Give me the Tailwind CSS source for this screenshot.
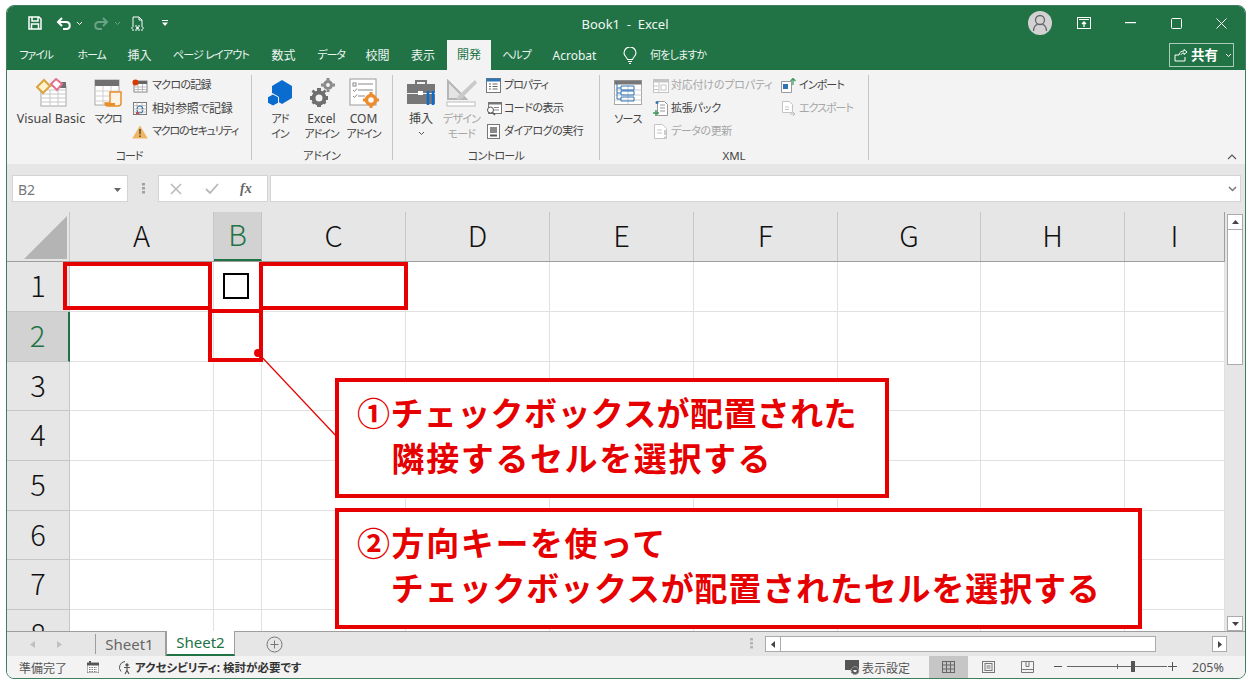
<!DOCTYPE html>
<html lang="ja">
<head>
<meta charset="UTF-8">
<title>Book1 - Excel</title>
<script src="https://cdn.jsdelivr.net/npm/@tailwindcss/browser@4"></script>
</head>
<body class="relative bg-white w-[1252px] h-[686px] overflow-hidden font-['Noto_Sans','Noto_Sans_CJK_JP',sans-serif] [font-feature-settings:'palt'] text-[12px] text-[#444]">

<!-- Window -->
<div class="absolute left-[6px] top-[5px] w-[1240px] h-[674px] border border-[#3f7f60] rounded-[8px] overflow-hidden flex flex-col bg-[#e6e6e6]">

  <!-- Title bar -->
  <div class="h-[34px] bg-[#217346] text-white flex items-center shrink-0">
    <div class="w-[571px] flex items-center pl-[21px]">
      <svg class="w-[14px] h-[14px]" viewBox="0 0 14 14" fill="none" stroke="#fff" stroke-width="1.5"><path d="M1 1h10l2 2v10H1z"/><path d="M4 1v4h6V1M3.500 13V8h7v5"/></svg>
      <svg class="w-[15px] h-[13px] ml-[14px]" viewBox="0 0 15 13" fill="none" stroke="#fff" stroke-width="2"><path d="M6 1L2 5l4 4"/><path d="M2 5h8c5 0 5 7 0 7H7"/></svg>
      <svg class="w-[7px] h-[5px] ml-[5px]" viewBox="0 0 7 5" fill="none" stroke="#fff"><path d="M1 1l2.500 2.500L6 1"/></svg>
      <svg class="w-[15px] h-[13px] ml-[11px]" viewBox="0 0 15 13" fill="none" stroke="#6aa287" stroke-width="2"><path d="M9 1l4 4-4 4"/><path d="M13 5H5c-5 0-5 7 0 7h3"/></svg>
      <svg class="w-[7px] h-[5px] ml-[5px]" viewBox="0 0 7 5" fill="none" stroke="#6aa287"><path d="M1 1l2.500 2.500L6 1"/></svg>
      <svg class="w-[13px] h-[15px] ml-[10px]" viewBox="0 0 13 15" fill="none" stroke="#fff"><path d="M2 9V1h6l3 3v5M8 1v3h3"/><rect x="1" y="10" width="11" height="4" stroke-dasharray="2 1"/><circle cx="6.500" cy="12" r="1" fill="#fff"/></svg>
      <svg class="w-[6px] h-[6px] ml-[18px]" viewBox="0 0 6 6" fill="#fff"><path d="M0 0h6v1H0zM0 2.500h6L3 6z"/></svg>
    </div>
    <div class="w-[94px] pt-[3px] text-center text-[13px] text-[#f2f7f4] whitespace-pre">Book1  -  Excel</div>
    <div class="flex-1 flex items-center">
      <div class="ml-[356px] w-[24px] h-[24px] rounded-full bg-[#d2d2d2] flex items-center justify-center">
        <svg class="w-[16px] h-[18px]" viewBox="0 0 16 18" fill="none" stroke="#666" stroke-width="1.300"><circle cx="8" cy="6" r="4.500"/><path d="M1.500 17c0-5 3-6.500 4-6.500M14.500 17c0-5-3-6.500-4-6.500"/></svg>
      </div>
      <svg class="w-[14px] h-[12px] ml-[25px]" viewBox="0 0 14 12" fill="none" stroke="#fff"><rect x=".5" y=".5" width="13" height="11"/><path d="M2 2.500h10" /><path d="M7 10V5M5 7l2-2 2 2" stroke-width="1.300"/></svg>
      <svg class="w-[11px] h-[2px] ml-[34px]" viewBox="0 0 11 2"><rect width="11" height="1.200" fill="#fff"/></svg>
      <svg class="w-[11px] h-[11px] ml-[35px]" viewBox="0 0 11 11" fill="none" stroke="#fff"><rect x=".5" y=".5" width="10" height="10" rx="1"/></svg>
      <svg class="w-[11px] h-[11px] ml-[34px]" viewBox="0 0 11 11" fill="none" stroke="#fff"><path d="M.5.500l10 10M10.500.500l-10 10"/></svg>
    </div>
  </div>

  <!-- Tabs -->
  <div class="h-[30px] pt-px bg-[#217346] text-[#eef5f1] flex items-stretch shrink-0 relative">
    <div class="w-[58px] flex items-center justify-center text-[11px] tracking-[-1.2px]">ファイル</div>
    <div class="w-[53px] flex items-center justify-center text-[11px] tracking-[-1.200px]">ホーム</div>
    <div class="w-[43px] flex items-center justify-center">挿入</div>
    <div class="w-[100px] flex items-center justify-center text-[11px] tracking-[-0.8px]">ページ レイアウト</div>
    <div class="w-[45px] flex items-center justify-center">数式</div>
    <div class="w-[50px] flex items-center justify-center text-[11px] tracking-[-1.2px]">データ</div>
    <div class="w-[43px] flex items-center justify-center">校閲</div>
    <div class="w-[48px] flex items-center justify-center">表示</div>
    <div class="w-[44px] -mt-px flex items-center justify-center bg-[#f3f3f3] text-[#217346]">開発</div>
    <div class="w-[51px] flex items-center justify-center text-[11px] tracking-[-0.9px]">ヘルプ</div>
    <div class="w-[65px] flex items-center justify-center">Acrobat</div>
    <svg class="w-[14px] h-[18px] ml-[16px] self-center" viewBox="0 0 14 18" fill="none" stroke="#fff" stroke-width="1.100"><path d="M4.500 12.500C4 10 1 9 1 6a6 6 0 0 1 12 0c0 3-3 4-3.500 6.500z"/><path d="M5 14.500h4M6 16.500h2"/></svg>
    <div class="ml-[13px] flex items-center text-[11px] tracking-[-0.8px]">何をしますか</div>
    <div class="absolute left-[1162px] top-[3px] w-[65px] h-[24px] border border-[#a9cdb9] flex items-center text-white">
      <svg class="w-[14px] h-[13px] ml-[4px]" viewBox="0 0 14 13" fill="none" stroke="#fff"><path d="M1 6v6h10V8M1 6h4M5 6c0-3 3-4 5-4V.500l3 2.500-3 2.500V4c-2 0-3 1-3 2"/></svg>
      <span class="ml-[3px] font-bold text-[13.500px]">共有</span>
      <svg class="w-[7px] h-[5px] ml-[7px]" viewBox="0 0 7 5" fill="none" stroke="#fff"><path d="M1 1l2.500 2.500L6 1"/></svg>
    </div>
  </div>

  <!-- Ribbon -->
  <div class="h-[94px] bg-[#f3f3f3] flex items-start shrink-0 relative text-[#444]">

    <!-- Code group -->
    <div class="w-[244px] h-[94px] pt-[4px] flex flex-col shrink-0">
      <div class="h-[73px] flex">
        <div class="ml-[9px] w-[70px] shrink-0 flex flex-col items-center">
          <div class="h-[37px] flex items-center">
            <svg class="w-[31px] h-[29px]" viewBox="0 0 31 29"><rect x="5" y="8" width="25" height="20" fill="#fff" stroke="#a8a8a8"/><path d="M5 12h25M5 16h25M5 20h25M5 24h25M14 12v16M22 12v16" stroke="#c8c8c8"/><rect x="22" y="4" width="8" height="6" fill="#707070"/><path d="M1 9l7-7 6 6-7 7z" fill="#fff2cc" stroke="#d9a441" stroke-width="2"/><path d="M15 6l5-5 6 5-5 6z" fill="#fff" stroke="#e0748f" stroke-width="2"/></svg>
          </div>
          <div class="leading-[15px] whitespace-nowrap text-[12.500px]">Visual Basic</div>
        </div>
        <div class="ml-[6px] w-[32px] shrink-0 flex flex-col items-center">
          <div class="h-[37px] flex items-center">
            <svg class="w-[29px] h-[28px]" viewBox="0 0 29 28"><rect x="1" y="1" width="24" height="25" fill="#fff" stroke="#a8a8a8"/><rect x="1" y="1" width="24" height="6" fill="#707070"/><path d="M1 12h24M1 17h24M1 22h24M9 7v19M17 7v19" stroke="#d0d0d0"/><path d="M16 13h11v11c0 3-2 3-3 3H14c-2 0-3-1-3-3h5z" fill="#fdf3e6" stroke="#e88f2b" stroke-width="1.500"/><path d="M11 24h10v3H13z" fill="#e88f2b"/></svg>
          </div>
          <div class="leading-[15px] whitespace-nowrap text-[11px] tracking-[-1.2px]">マクロ</div>
        </div>
        <div class="ml-[8px] shrink-0 flex flex-col">
          <div class="h-[23px] flex items-center whitespace-nowrap text-[11px] tracking-[-0.7px]">
            <div class="w-[20px]"><svg class="w-[16px] h-[14px]" viewBox="0 0 16 14"><rect x="2" y="2" width="13" height="11" fill="#fff" stroke="#888"/><rect x="2" y="2" width="13" height="3" fill="#666"/><path d="M2 8h13M2 10.500h13M6 5v8M10.500 5v8" stroke="#bbb"/><circle cx="3.500" cy="3.500" r="3" fill="#d83b01"/></svg></div>マクロの記録
          </div>
          <div class="h-[23px] flex items-center whitespace-nowrap tracking-[-0.4px]">
            <div class="w-[20px]"><svg class="w-[16px] h-[15px]" viewBox="0 0 16 15"><rect x="1.500" y="1.500" width="13" height="12" fill="#fff" stroke="#777"/><path d="M1.500 4.500h13M5 1.500v12M10 1.500v12M1.500 8h13M1.500 11h13" stroke="#bbb"/><path d="M5 8a3 3 0 0 1 6 0l-1.500-1M11 9a3 3 0 0 1-6 0" fill="none" stroke="#2e75b6"/><rect x="4" y="11" width="3" height="2.500" fill="#c0504d"/></svg></div>相対参照で記録
          </div>
          <div class="h-[23px] flex items-center whitespace-nowrap text-[11px] tracking-[-1.2px]">
            <div class="w-[20px]"><svg class="w-[16px] h-[14px]" viewBox="0 0 16 14"><path d="M8 .500L15.800 13.500H.200z" fill="#f2b661"/><path d="M7.200 4h1.600l-.2 5.500H7.400zM7.200 10.500h1.600V12H7.200z" fill="#444"/></svg></div>マクロのセキュリティ
          </div>
        </div>
      </div>
      <div class="h-[17px] leading-[17px] text-center text-[11px] tracking-[-1.2px]">コード</div>
    </div>
    <div class="w-px h-[85px] mt-[5px] bg-[#c6c6c6] shrink-0"></div>

    <!-- Add-in group -->
    <div class="w-[140px] h-[94px] pt-[4px] flex flex-col shrink-0">
      <div class="h-[73px] flex">
        <div class="ml-[13px] w-[30px] shrink-0 flex flex-col items-center">
          <div class="h-[37px] flex items-center">
            <svg class="w-[26px] h-[27px]" viewBox="0 0 26 27"><path d="M15 1l10 6v12l-10 6-5-3v-5l-5-3V7z" fill="#0a6ccf"/><path d="M6 15l5.500 3v6L6 27 .500 24v-6z" fill="#0a6ccf" stroke="#f3f3f3"/></svg>
          </div>
          <div class="leading-[15px] text-center text-[11px] tracking-[-1px]">アド<br>イン</div>
        </div>
        <div class="ml-[9px] w-[35px] shrink-0 flex flex-col items-center">
          <div class="h-[37px] flex items-center">
            <svg class="w-[26px] h-[29px]" viewBox="0 0 26 29" fill="#6f6f6f"><circle cx="10" cy="20" r="5.500" fill="none" stroke="#6f6f6f" stroke-width="4"/><path d="M8 10h4v3H8zM8 27h4v2H8zM1 18h3v4H1zM16 18h3v4h-3zM2.500 13.500l2-2 2.500 2.500-2 2zM13 24l2-2 2.500 2.500-2 2zM15.500 11.500l2 2-2.500 2.500-2-2zM5 22l2 2-2.500 2.500-2-2z"/><circle cx="19" cy="7" r="3.500" fill="none" stroke="#8a8a8a" stroke-width="3"/><path d="M17.500 0h3v2h-3zM17.500 12h3v2h-3zM12 5.500h2v3h-2zM24 5.500h2v3h-2z" fill="#8a8a8a"/></svg>
          </div>
          <div class="leading-[15px] text-center whitespace-nowrap text-[11px] tracking-[-1px]"><span class="text-[12px] tracking-normal">Excel</span><br>アドイン</div>
        </div>
        <div class="ml-[7px] w-[35px] shrink-0 flex flex-col items-center">
          <div class="h-[37px] flex items-center">
            <svg class="w-[30px] h-[30px]" viewBox="0 0 30 30"><rect x="1" y="1" width="26" height="26" fill="#fff" stroke="#9a9a9a"/><rect x="4" y="5" width="3" height="3" fill="none" stroke="#888"/><path d="M9 6h15M9 12h15M9 18h7M4 12l1.500 1.500L8 10.500M4 18l1.500 1.500L8 16.500" stroke="#888" fill="none"/><circle cx="22" cy="22" r="4.500" fill="none" stroke="#ed8b2d" stroke-width="3.500"/><path d="M20.500 14h3v3h-3zM20.500 27h3v3h-3zM14 20.500h3v3h-3zM27 20.500h3v3h-3z" fill="#ed8b2d"/></svg>
          </div>
          <div class="leading-[15px] text-center whitespace-nowrap text-[11px] tracking-[-1px]"><span class="text-[12px] tracking-normal">COM</span><br>アドイン</div>
        </div>
      </div>
      <div class="h-[17px] leading-[17px] text-center text-[11px] tracking-[-0.2px]">アドイン</div>
    </div>
    <div class="w-px h-[85px] mt-[5px] bg-[#c6c6c6] shrink-0"></div>

    <!-- Controls group -->
    <div class="w-[206px] h-[94px] pt-[4px] flex flex-col shrink-0">
      <div class="h-[73px] flex">
        <div class="ml-[13px] w-[30px] shrink-0 flex flex-col items-center">
          <div class="h-[37px] flex items-center">
            <svg class="w-[31px] h-[28px]" viewBox="0 0 31 28"><path d="M10 5V2h10v3" fill="none" stroke="#777" stroke-width="2"/><rect x="1" y="5" width="28" height="9" fill="#777"/><rect x="1" y="15" width="28" height="10" fill="#777"/><rect x="12" y="12" width="5" height="4" fill="#fff"/><path d="M22 12v14M27 12v14" stroke="#0a6ccf" stroke-width="2.500"/></svg>
          </div>
          <div class="leading-[15px] whitespace-nowrap">挿入</div>
          <svg class="w-[7px] h-[5px] mt-[5px]" viewBox="0 0 7 5" fill="none" stroke="#555"><path d="M1 1l2.500 2.500L6 1"/></svg>
        </div>
        <div class="ml-[7px] w-[37px] shrink-0 flex flex-col items-center text-[#a6a6a6]">
          <div class="h-[37px] flex items-center">
            <svg class="w-[31px] h-[28px]" viewBox="0 0 31 28"><path d="M2 2v18h18z" fill="#e4e4e4" stroke="#b5b5b5" stroke-width="2"/><path d="M29 1L12 17l-1 4 4-1L31 4z" fill="#c9c9c9"/><rect x="1" y="23" width="28" height="4" fill="#fff" stroke="#bdbdbd"/></svg>
          </div>
          <div class="leading-[15px] text-center whitespace-nowrap text-[11px] tracking-[-0.8px]">デザイン<br>モード</div>
        </div>
        <div class="ml-[6px] shrink-0 flex flex-col">
          <div class="h-[23px] flex items-center whitespace-nowrap text-[11px] tracking-[-1px]">
            <div class="w-[18px]"><svg class="w-[15px] h-[15px]" viewBox="0 0 15 15"><rect x=".5" y=".5" width="14" height="14" fill="#fff" stroke="#777"/><rect x=".5" y=".5" width="14" height="3" fill="#2e75b6"/><path d="M3 6h2M3 8.500h2M3 11h2M6.500 6h5M6.500 8.500h5M6.500 11h5" stroke="#666"/></svg></div>プロパティ
          </div>
          <div class="h-[23px] flex items-center whitespace-nowrap text-[11px] tracking-[-0.5px]">
            <div class="w-[18px]"><svg class="w-[16px] h-[15px]" viewBox="0 0 16 15"><rect x="2.500" y="1.500" width="13" height="11" fill="#fff" stroke="#777"/><rect x="2.500" y="1.500" width="13" height="2" fill="#777"/><path d="M8 6.500h5M8 9h5" stroke="#888"/><circle cx="4.500" cy="9" r="3" fill="#fff" stroke="#555"/><path d="M6.500 11.500L9 14" stroke="#555" stroke-width="1.500"/></svg></div>コードの表示
          </div>
          <div class="h-[23px] flex items-center whitespace-nowrap text-[11px] tracking-[-0.5px]">
            <div class="w-[18px]"><svg class="w-[15px] h-[15px]" viewBox="0 0 15 15"><rect x="1.500" y=".5" width="12" height="14" fill="#fff" stroke="#777"/><rect x="4" y="3" width="7" height="6" fill="#8a8a8a"/><rect x="4" y="10.500" width="7" height="2" fill="#555"/></svg></div>ダイアログの実行
          </div>
        </div>
      </div>
      <div class="h-[17px] leading-[17px] text-center text-[11px] tracking-[-0.7px]">コントロール</div>
    </div>
    <div class="w-px h-[85px] mt-[5px] bg-[#c6c6c6] shrink-0"></div>

    <!-- XML group -->
    <div class="w-[268px] h-[94px] pt-[4px] flex flex-col shrink-0">
      <div class="h-[73px] flex">
        <div class="ml-[13px] w-[30px] shrink-0 flex flex-col items-center">
          <div class="h-[37px] flex items-center">
            <svg class="w-[28px] h-[25px]" viewBox="0 0 28 25"><rect x=".5" y=".5" width="27" height="24" fill="#fff" stroke="#a8a8a8"/><rect x=".5" y=".5" width="27" height="4" fill="#777"/><path d="M14 5v19M.500 10h27M.500 15h27M.500 20h27" stroke="#ccc"/><path d="M3 3v16h4M3 8h4M3 13h4" fill="none" stroke="#2e75b6"/><path d="M7 6h13v4H7zM7 11h13v4H7zM7 17h13v4H7z" fill="none" stroke="#2e75b6"/></svg>
          </div>
          <div class="leading-[15px] whitespace-nowrap text-[11px] tracking-[-0.5px]">ソース</div>
        </div>
        <div class="ml-[10px] w-[127px] shrink-0 flex flex-col text-[11px]">
          <div class="h-[23px] flex items-center whitespace-nowrap text-[#a6a6a6] tracking-[-0.2px]">
            <div class="w-[18px]"><svg class="w-[16px] h-[14px]" viewBox="0 0 16 14"><rect x=".5" y=".5" width="15" height="13" fill="#fff" stroke="#c4c4c4"/><rect x=".5" y=".5" width="15" height="3" fill="#c4c4c4"/><path d="M6 3.500v10M.500 7h5M.500 10.500h5" stroke="#c4c4c4"/><rect x="8" y="6" width="5" height="5" fill="none" stroke="#c4c4c4"/></svg></div>対応付けのプロパティ
          </div>
          <div class="h-[23px] flex items-center whitespace-nowrap tracking-[-0.2px]">
            <div class="w-[18px]"><svg class="w-[16px] h-[17px]" viewBox="0 0 16 17"><path d="M4.500 1.500h7l3 3v11h-10z" fill="#fff" stroke="#999"/><path d="M7 5h5M7 8h5M7 11h5" stroke="#999"/><circle cx="4" cy="2.500" r="1.500" fill="#2e75b6"/><path d="M0 13h6M3 10v6" stroke="#3e9b5f" stroke-width="1.500"/></svg></div>拡張パック
          </div>
          <div class="h-[23px] flex items-center whitespace-nowrap text-[#a6a6a6] tracking-[-0.4px]">
            <div class="w-[18px]"><svg class="w-[15px] h-[15px]" viewBox="0 0 15 15"><path d="M1.500.500h8l4 4v10h-12z" fill="#fff" stroke="#c4c4c4"/><path d="M4 6h5M4 9h5" stroke="#c4c4c4"/><path d="M12 6v5M12 12.500v1.500" stroke="#bcbcbc" stroke-width="1.500"/></svg></div>データの更新
          </div>
        </div>
        <div class="shrink-0 flex flex-col text-[11px]">
          <div class="h-[23px] flex items-center whitespace-nowrap tracking-[-0.9px]">
            <div class="w-[19px]"><svg class="w-[16px] h-[15px]" viewBox="0 0 16 15"><path d="M1.500 3.500h10v11h-10z" fill="#fff" stroke="#999"/><rect x="3" y="6" width="5" height="5" fill="#2e75b6"/><path d="M13 7V1M10.500 3L13 .500 15.500 3" fill="none" stroke="#3e9b5f" stroke-width="1.300"/></svg></div>インポート
          </div>
          <div class="h-[23px] flex items-center whitespace-nowrap text-[#a6a6a6] tracking-[-1px]">
            <div class="w-[19px] pl-[2px]"><svg class="w-[14px] h-[15px]" viewBox="0 0 14 15"><path d="M.5.500h7l3 3v8H.500z" fill="#fff" stroke="#c4c4c4"/><path d="M3 6h4M3 8.500h4" stroke="#c4c4c4"/><path d="M8 13h5M11 11l2 2-2 2" fill="none" stroke="#bcbcbc"/></svg></div>エクスポート
          </div>
        </div>
      </div>
      <div class="h-[17px] leading-[17px] text-center text-[11.500px]">XML</div>
    </div>
    <div class="w-px h-[85px] mt-[5px] bg-[#c6c6c6] shrink-0"></div>

    <svg class="absolute left-[1220px] top-[84px] w-[10px] h-[6px]" viewBox="0 0 10 6" fill="none" stroke="#555" stroke-width="1.100"><path d="M1 5l4-4 4 4"/></svg>
  </div>

  <!-- Formula bar -->
  <div class="h-[48px] bg-[#e6e6e6] flex items-start pt-[11px] pl-[5px] shrink-0">
    <div class="w-[116px] h-[27px] bg-white border border-[#d4d4d4] flex items-center justify-between pl-[5px] pr-[6px] pt-[2px] text-[14px] text-[#777]">
      B2
      <svg class="w-[7px] h-[4px]" viewBox="0 0 7 4" fill="#666"><path d="M0 0h7L3.500 4z"/></svg>
    </div>
    <svg class="w-[3px] h-[11px] ml-[14px] mt-[8px]" viewBox="0 0 3 11" fill="#a0a0a0"><rect y="0" width="3" height="2.500"/><rect y="4" width="3" height="2.500"/><rect y="8" width="3" height="2.500"/></svg>
    <div class="ml-[13px] w-[110px] h-[27px] bg-white border border-[#d4d4d4] flex items-center">
      <svg class="w-[12px] h-[12px] ml-[11px]" viewBox="0 0 12 12" fill="none" stroke="#b8b8b8" stroke-width="1.500"><path d="M1 1l10 10M11 1L1 11"/></svg>
      <svg class="w-[14px] h-[12px] ml-[23px]" viewBox="0 0 14 12" fill="none" stroke="#b8b8b8" stroke-width="1.800"><path d="M1 6l4 4 8-9"/></svg>
      <span class="ml-[21px] font-['Liberation_Serif',serif] italic font-bold text-[14px] text-[#666]">fx</span>
    </div>
    <div class="ml-[2px] w-[971px] h-[27px] bg-white border border-[#d4d4d4] flex items-center justify-end pr-[3px]">
      <svg class="w-[9px] h-[6px]" viewBox="0 0 9 6" fill="none" stroke="#777" stroke-width="1.500"><path d="M1 1l3.500 3.500L8 1"/></svg>
    </div>
  </div>

  <!-- Sheet area -->
  <div class="h-[419px] flex shrink-0 overflow-hidden">
    <div class="w-[1218px] h-[419px] overflow-hidden">
      <!-- column headers -->
      <div class="flex h-[50px] bg-[#e6e6e6] border-b border-[#9e9e9e] font-['Noto_Sans_CJK_JP',sans-serif] text-[29px] font-light text-[#111]">
        <div class="w-[63px] shrink-0 border-r border-[#c6c6c6] relative">
          <svg class="absolute left-[17px] top-[4px] w-[43px] h-[43px]" viewBox="0 0 43 43"><path d="M43 0v43H0z" fill="#b4b4b4"/></svg>
        </div>
        <div class="w-[144px] pb-[3px] border-r border-[#c6c6c6] flex items-center justify-center">A</div>
        <div class="w-[48px] pb-[3px] bg-[#d2d2d2] border-r border-[#c6c6c6] border-b-2 border-b-[#217346] text-[#217346] flex items-center justify-center">B</div>
        <div class="w-[144px] pb-[3px] border-r border-[#c6c6c6] flex items-center justify-center">C</div>
        <div class="w-[144px] pb-[3px] border-r border-[#c6c6c6] flex items-center justify-center">D</div>
        <div class="w-[144px] pb-[3px] border-r border-[#c6c6c6] flex items-center justify-center">E</div>
        <div class="w-[144px] pb-[3px] border-r border-[#c6c6c6] flex items-center justify-center">F</div>
        <div class="w-[143px] pb-[3px] border-r border-[#c6c6c6] flex items-center justify-center">G</div>
        <div class="w-[144px] pb-[3px] border-r border-[#c6c6c6] flex items-center justify-center">H</div>
        <div class="w-[100px] pb-[3px] border-r border-[#9e9e9e] flex items-center justify-center">I</div>
      </div>
      <div id="rows"></div>
    </div>
    <!-- vertical scrollbar -->
    <div class="w-[20px] pl-[2px] pt-[2px] flex flex-col">
      <div class="w-[16px] h-[16px] bg-white border border-[#ababab] flex items-center justify-center">
        <svg class="w-[7px] h-[4px]" viewBox="0 0 7 4" fill="#444"><path d="M3.500 0L7 4H0z"/></svg>
      </div>
      <div class="w-[16px] h-[135px] bg-white border border-t-0 border-[#ababab]"></div>
      <div class="w-[16px] h-[251px]"></div>
      <div class="w-[16px] h-[15px] bg-white border border-[#ababab] flex items-center justify-center">
        <svg class="w-[7px] h-[4px]" viewBox="0 0 7 4" fill="#444"><path d="M0 0h7L3.500 4z"/></svg>
      </div>
    </div>
  </div>

  <!-- Sheet tabs -->
  <div class="h-[25px] bg-[#e6e6e6] border-t border-[#9e9e9e] flex items-stretch shrink-0 relative">
    <svg class="w-[5px] h-[7px] ml-[23px] self-center" viewBox="0 0 5 7" fill="#c0c0c0"><path d="M5 0v7L0 3.500z"/></svg>
    <svg class="w-[5px] h-[7px] ml-[22px] self-center" viewBox="0 0 5 7" fill="#c0c0c0"><path d="M0 0v7l5-3.500z"/></svg>
    <div class="w-px h-[20px] ml-[33px] self-center bg-[#9e9e9e]"></div>
    <div class="w-[70px] pr-[2px] flex items-center justify-center text-[15px] text-[#666] border-r border-[#9e9e9e]">Sheet1</div>
    <div class="w-[69px] -mt-px bg-white border-b-2 border-[#217346] border-x border-x-[#9e9e9e] flex items-center justify-center text-[15px] text-[#217346]">Sheet2</div>
    <svg class="w-[17px] h-[17px] ml-[31px] self-center" viewBox="0 0 17 17" fill="none" stroke="#777"><circle cx="8.500" cy="8.500" r="7.500"/><path d="M8.500 4.500v8M4.500 8.500h8"/></svg>
    <svg class="absolute left-[743px] top-[6px] w-[3px] h-[11px]" viewBox="0 0 3 11" fill="#b4b4b4"><rect width="3" height="2.500"/><rect y="4" width="3" height="2.500"/><rect y="8" width="3" height="2.500"/></svg>
    <div class="absolute left-[758px] top-[4px] flex h-[16px]">
      <div class="w-[16px] bg-white border border-[#ababab] flex items-center justify-center"><svg class="w-[4px] h-[7px]" viewBox="0 0 4 7" fill="#444"><path d="M4 0v7L0 3.500z"/></svg></div>
      <div class="w-[375px] bg-white border border-l-0 border-[#ababab]"></div>
      <div class="w-[56px]"></div>
      <div class="w-[15px] bg-white border border-[#ababab] flex items-center justify-center"><svg class="w-[4px] h-[7px]" viewBox="0 0 4 7" fill="#444"><path d="M0 0v7l4-3.500z"/></svg></div>
    </div>
  </div>

  <!-- Status bar -->
  <div class="h-[22px] bg-[#f3f3f3] flex items-center shrink-0 text-[12px] text-[#555] relative">
    <span class="ml-[12px] pt-[3px]">準備完了</span>
    <svg class="w-[12px] h-[12px] ml-[20px]" viewBox="0 0 12 12"><rect y="2" width="12" height="10" fill="#fff" stroke="#666"/><rect y="2" width="12" height="2.500" fill="#555"/><rect x="2" y="0" width="2" height="3" fill="#555"/><path d="M2 6.500h8M2 8.500h8M2 10.500h8" stroke="#777" stroke-dasharray="1.500 1"/></svg>
    <svg class="w-[16px] h-[15px] ml-[19px]" viewBox="0 0 16 15" fill="none" stroke="#555"><path d="M7 1.500a6 6 0 0 0-4 10"/><circle cx="9" cy="5" r="1.200" fill="#555"/><path d="M6 7.500h6M9 7.500v3M7 14l2-3.500 2 3.500" stroke-width="1.200"/></svg>
    <span class="ml-px pt-[2px] font-bold text-[11.500px] text-[#333] whitespace-nowrap">アクセシビリティ: 検討が必要です</span>
    <div class="absolute left-[838px] top-0 h-[22px] flex items-center">
      <svg class="w-[16px] h-[15px]" viewBox="0 0 16 15"><rect width="14" height="10" fill="#555"/><circle cx="10" cy="10.500" r="3" fill="none" stroke="#555" stroke-width="2.500"/><circle cx="10" cy="10.500" r="3.800" fill="none" stroke="#f3f3f3" stroke-width=".8" stroke-dasharray="1 1"/></svg>
      <span class="ml-px pt-[3px]">表示設定</span>
    </div>
    <div class="absolute left-[922px] top-0 w-[39px] h-[22px] bg-[#c6c6c6] flex items-center justify-center">
      <svg class="w-[13px] h-[12px]" viewBox="0 0 13 12" fill="none" stroke="#666"><rect x=".5" y=".5" width="12" height="11"/><path d="M4.500.500v11M8.500.500v11M.500 4h12M.500 8h12"/></svg>
    </div>
    <svg class="absolute left-[975px] top-[5px] w-[13px] h-[12px]" viewBox="0 0 13 12" fill="none" stroke="#777"><rect x=".5" y=".5" width="12" height="11"/><rect x="3" y="2.500" width="7" height="7"/><path d="M4.500 5h4M4.500 7h4"/></svg>
    <svg class="absolute left-[1014px] top-[5px] w-[13px] h-[12px]" viewBox="0 0 13 12" fill="none" stroke="#777"><path d="M.5.500h12v11H.500zM.500 8.500h12M5 .500v5h3v-5"/></svg>
    <div class="absolute left-[1047px] top-[10px] w-[8px] h-px bg-[#555]"></div>
    <div class="absolute left-[1060px] top-[10px] w-[100px] h-px bg-[#666]"></div>
    <div class="absolute left-[1110px] top-[8px] w-px h-[5px] bg-[#666]"></div>
    <div class="absolute left-[1124px] top-[5px] w-[4px] h-[11px] bg-[#555]"></div>
    <div class="absolute left-[1161px] top-[10px] w-[9px] h-px bg-[#555]"></div>
    <div class="absolute left-[1165px] top-[6px] w-px h-[9px] bg-[#555]"></div>
    <span class="absolute left-[1185px] top-[3px] text-[12.500px]">205%</span>
  </div>
</div>

<!-- Red annotations -->
<svg class="absolute left-[250px] top-[345px] w-[95px] h-[100px]" viewBox="0 0 95 100" fill="none"><path d="M8 8l80 85" stroke="#e60000" stroke-width="1.200"/></svg>
<div class="absolute left-[63px] top-[262px] w-[149px] h-[48px] border-[4px] border-[#e60000]"></div>
<div class="absolute left-[259px] top-[262px] w-[149px] h-[48px] border-[4px] border-[#e60000]"></div>
<div class="absolute left-[208px] top-[309px] w-[55px] h-[53px] border-[4px] border-[#e60000]"></div>
<div class="absolute left-[223px] top-[273px] w-[26px] h-[26px] border-[2.500px] border-black"></div>
<svg class="absolute left-[250px] top-[345px] w-[16px] h-[16px]" viewBox="0 0 16 16"><circle cx="8" cy="8" r="4" fill="#e60000"/></svg>

<div class="absolute left-[335px] top-[378px] w-[554px] h-[120px] border-[4px] border-[#e60000] bg-white pl-[18px] pt-[8px] font-['Noto_Sans_CJK_JP',sans-serif] [font-feature-settings:normal] font-bold text-[33px] leading-[45px] text-[#e60000] whitespace-pre"><span class="tracking-[0.4px]">①チェックボックスが配置された</span>
<span class="tracking-[1.6px]">　隣接するセルを選択する</span></div>
<div class="absolute left-[335px] top-[508px] w-[807px] h-[121px] border-[4px] border-[#e60000] bg-white pl-[18px] pt-[8px] font-['Noto_Sans_CJK_JP',sans-serif] [font-feature-settings:normal] font-bold text-[33px] leading-[45px] text-[#e60000] whitespace-pre"><span class="tracking-[1.6px]">②方向キーを使って</span>
<span class="tracking-[0.85px]">　チェックボックスが配置されたセルを選択する</span></div>

<script>
  // Row heights follow the 205% zoom rounding in the sheet
  const heights = [50, 50, 49, 50, 50, 49, 50, 50];
  const widths = [144, 48, 144, 144, 144, 144, 143, 144, 100];
  const rows = document.getElementById('rows');
  heights.forEach((h, i) => {
    const row = document.createElement('div');
    row.className = 'flex bg-white';
    row.style.height = h + 'px';
    const selected = i === 1;
    let html = `<div class="${selected ? 'bg-[#d2d2d2] text-[#217346] border-r-2 border-r-[#217346]' : 'bg-[#e6e6e6] text-[#111] border-r border-r-[#c6c6c6]'} w-[63px] shrink-0 pb-[3px] border-b border-b-[#c6c6c6] flex items-center justify-center font-['Noto_Sans_CJK_JP',sans-serif] font-light text-[29px]">${i + 1}</div>`;
    widths.forEach(w => {
      html += `<div class="border-r border-b border-[#e1e1e1] shrink-0" style="width:${w}px"></div>`;
    });
    row.innerHTML = html;
    rows.appendChild(row);
  });
</script>
</body>
</html>
